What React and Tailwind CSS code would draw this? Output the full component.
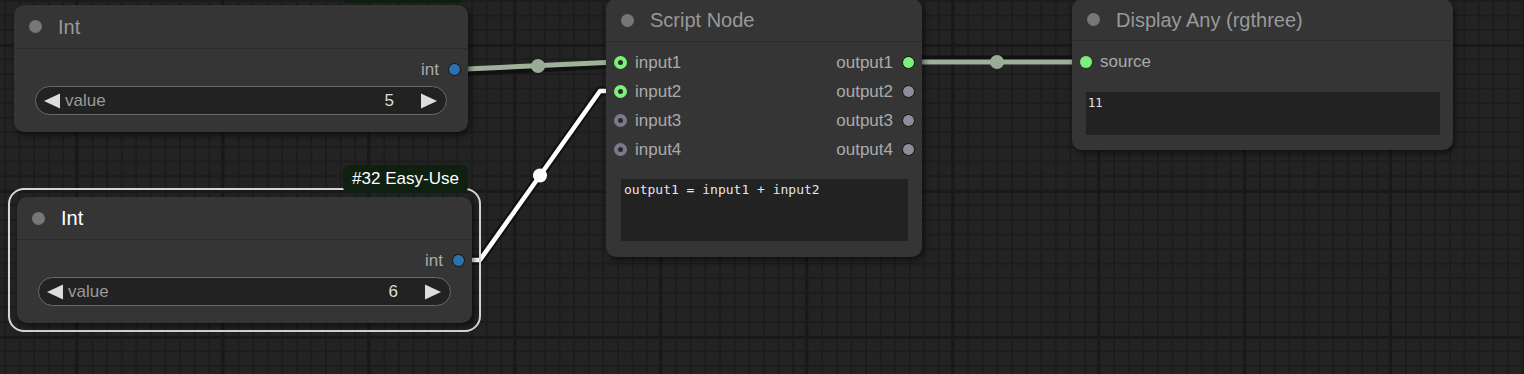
import React from 'react';

const sans = "font-['Liberation_Sans',Arial,sans-serif]";
const mono = "font-['DejaVu_Sans_Mono',monospace]";

// slot dots
function InDot({ kind }) {
  if (kind === 'ring-green')
    return <span className="w-[13px] h-[13px] rounded-full border-[4px] border-[#7af27a] bg-[#2a2a2a]" />;
  if (kind === 'ring-gray')
    return <span className="w-[13px] h-[13px] rounded-full border-[4px] border-[#7a7a8c] bg-[#2a2a2a]" />;
  return <span className="w-[12px] h-[12px] rounded-full bg-[#7af27a]" />;
}

function OutDot({ color }) {
  return <span className={`w-[13px] h-[13px] rounded-full border-[1.5px] border-[#111] ${color}`} />;
}

function Tri({ left }) {
  return (
    <svg width="16" height="16" viewBox="0 0 16 16" className="shrink-0">
      <polygon points={left ? '0,8 16,0.5 16,15.5' : '16,8 0,0.5 0,15.5'} fill="#dddddd" />
    </svg>
  );
}

function NumberWidget({ value }) {
  return (
    <div className="mt-[2px] mx-[21px] h-[29px] rounded-full border border-[#6a6a6a] bg-[#222222] flex items-center pl-[8px] pr-[9px]">
      <Tri left />
      <span className="ml-[5px] text-[17px] text-[#9a9a9a]">value</span>
      <span className="ml-auto text-[17px] text-[#dddddd]">{value}</span>
      <span className="ml-[27px] flex"><Tri /></span>
    </div>
  );
}

function Node({ box, title, titleH, titleColor, children }) {
  return (
    <div className={`absolute ${box} rounded-[10px] bg-[#353535] shadow-[2px_3px_6px_rgba(0,0,0,0.55)] flex flex-col ${sans}`}>
      <div className={`${titleH} shrink-0 flex items-center border-b border-[#2b2b2b]`}>
        <span className="ml-[15px] w-[13px] h-[13px] rounded-full bg-[#777777]" />
        <span className={`ml-[16px] text-[20px] ${titleColor}`}>{title}</span>
      </div>
      <div className="pt-[6px] flex flex-col">{children}</div>
    </div>
  );
}

function OutRow({ label, dot }) {
  return (
    <div className="h-[29px] flex items-center justify-end pr-[7px] gap-[9px]">
      <span className="text-[17px] text-[#aaaaaa]">{label}</span>
      <OutDot color={dot} />
    </div>
  );
}

const scriptSlots = [
  { inp: 'input1', ik: 'ring-green', out: 'output1', oc: 'bg-[#7af27a]' },
  { inp: 'input2', ik: 'ring-green', out: 'output2', oc: 'bg-[#8c8c9c]' },
  { inp: 'input3', ik: 'ring-gray', out: 'output3', oc: 'bg-[#8c8c9c]' },
  { inp: 'input4', ik: 'ring-gray', out: 'output4', oc: 'bg-[#8c8c9c]' },
];

export default function App() {
  return (
    <div className="relative w-[1524px] h-[374px] overflow-hidden bg-[#232323]">
      {/* canvas grid */}
      <div className="absolute inset-0 bg-[image:linear-gradient(to_right,#1c1c1c_2px,transparent_2px),linear-gradient(to_bottom,#1c1c1c_2px,transparent_2px)] bg-[size:14.6px_14.6px] bg-[position:4px_0px]" />
      <div className="absolute inset-0 bg-[image:linear-gradient(to_right,#191919_3px,transparent_3px),linear-gradient(to_bottom,#191919_3px,transparent_3px)] bg-[size:146px_146px] bg-[position:75px_44px]" />

      {/* links */}
      <svg className="absolute inset-0" width="1524" height="374">
        <g fill="none" strokeLinejoin="round">
          <path d="M455,70 L606,62.5 L620,62.5" stroke="#111" strokeWidth="9" transform="translate(0,2)" />
          <path d="M455,69.5 L606,62.5 L620,62.5" stroke="#9fb19b" strokeWidth="5" />
          <path d="M909,62 L1086,62" stroke="#111" strokeWidth="9" transform="translate(0,-2)" />
          <path d="M909,62 L1086,62" stroke="#9fb19b" strokeWidth="5" />
          <path d="M458,260 L480,260 L600,91 L620,91" stroke="#111" strokeWidth="9" />
          <path d="M458,260 L480,260 L600,91 L620,91" stroke="#ffffff" strokeWidth="4.5" />
        </g>
        <circle cx="538" cy="66" r="7" fill="#9aab97" />
        <circle cx="997" cy="62" r="7" fill="#9aab97" />
        <circle cx="540" cy="175.5" r="7" fill="#ffffff" />
      </svg>

      {/* badge of the node above the view */}
      <div className="absolute left-[342px] top-[-26px] w-[121px] h-[29px] rounded-[6px] bg-[#0f2011]" />

      {/* Int (top) */}
      <Node box="left-[14px] top-[5px] w-[454px] h-[127px]" title="Int" titleH="h-[44px]" titleColor="text-[#999999]">
        <OutRow label="int" dot="bg-[#2e6fae]" />
        <NumberWidget value="5" />
      </Node>

      {/* selected Int */}
      <div className="absolute left-[8px] top-[188px] w-[473px] h-[144px] rounded-[16px] border-2 border-[#d6d6d6]" />
      <Node box="left-[17px] top-[197px] w-[455px] h-[126px]" title="Int" titleH="h-[43px]" titleColor="text-[#ffffff]">
        <OutRow label="int" dot="bg-[#2e6fae]" />
        <NumberWidget value="6" />
      </Node>
      <div className={`absolute left-[343px] top-[165px] w-[125px] h-[28px] rounded-[6px] bg-[#0f2011] flex items-center justify-center text-[17px] text-white ${sans}`}>
        #32 Easy-Use
      </div>

      {/* Script Node */}
      <Node box="left-[606px] top-[-1px] w-[316px] h-[258px]" title="Script Node" titleH="h-[43px]" titleColor="text-[#999999]">
        {scriptSlots.map((s) => (
          <div key={s.inp} className="h-[29px] flex items-center pl-[8px] pr-[7px]">
            <InDot kind={s.ik} />
            <span className="ml-[8px] text-[17px] text-[#aaaaaa]">{s.inp}</span>
            <span className="ml-auto text-[17px] text-[#aaaaaa]">{s.out}</span>
            <span className="ml-[9px] flex"><OutDot color={s.oc} /></span>
          </div>
        ))}
        <div className={`mt-[15px] ml-[15px] mr-[14px] h-[62px] bg-[#222222] pl-[3px] pt-[3px] text-[13px] leading-[16px] text-[#e6e6e6] ${mono}`}>
          output1 = input1 + input2
        </div>
      </Node>

      {/* Display Any */}
      <Node box="left-[1072px] top-[-1px] w-[381px] h-[151px]" title="Display Any (rgthree)" titleH="h-[42px]" titleColor="text-[#999999]">
        <div className="h-[29px] flex items-center pl-[8px]">
          <InDot kind="fill-green" />
          <span className="ml-[8px] text-[17px] text-[#aaaaaa]">source</span>
        </div>
        <div className={`mt-[16px] ml-[14px] mr-[13px] h-[43px] bg-[#222222] pl-[2px] pt-[4px] text-[12px] leading-[15px] text-[#e6e6e6] ${mono}`}>
          11
        </div>
      </Node>
    </div>
  );
}
